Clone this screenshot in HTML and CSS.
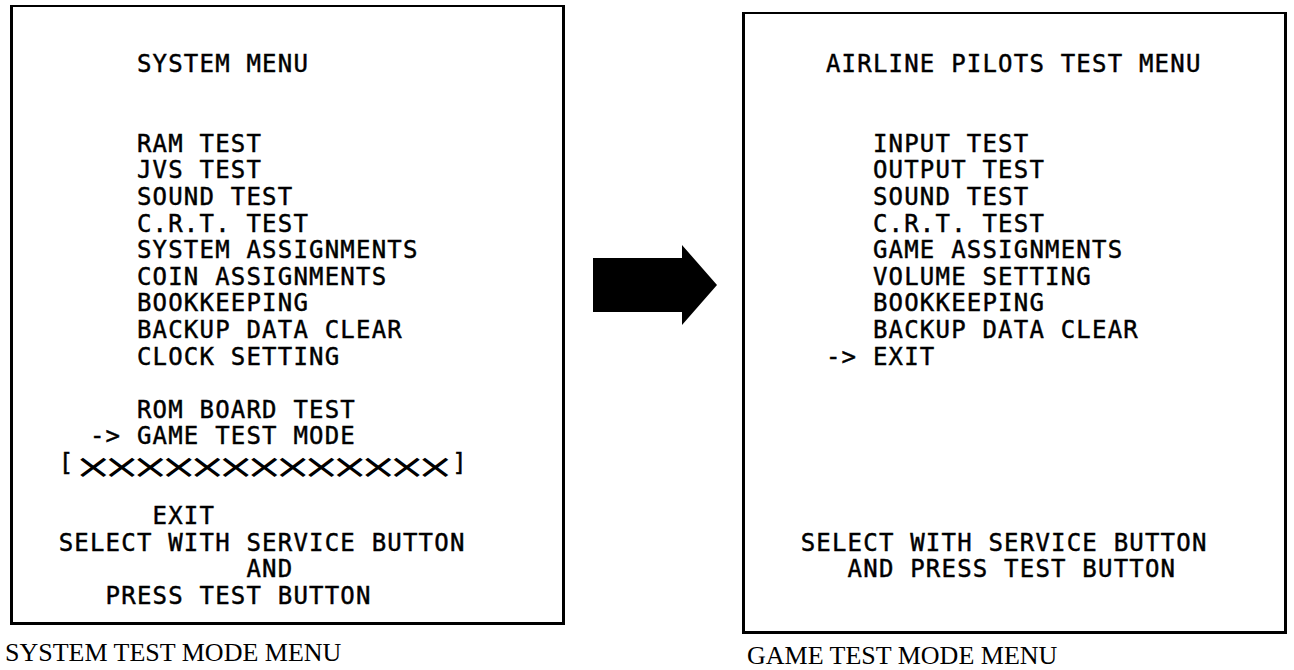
FILE: index.html
```
<!DOCTYPE html>
<html lang="en">
<head>
    <meta charset="UTF-8">
    <meta name="viewport" content="width=device-width, initial-scale=1.0">
    <title>Test Mode Menus</title>
    <link rel="stylesheet" href="styles.css">
</head>
<body>
    <main class="page">
        <figure class="shot system-shot">
            <pre class="screen system-screen">      SYSTEM MENU


      RAM TEST
      JVS TEST
      SOUND TEST
      C.R.T. TEST
      SYSTEM ASSIGNMENTS
      COIN ASSIGNMENTS
      BOOKKEEPING
      BACKUP DATA CLEAR
      CLOCK SETTING

      ROM BOARD TEST
   -> GAME TEST MODE
 [<span class="crosses"><span>×××××××××××××</span></span>]

       EXIT
 SELECT WITH SERVICE BUTTON
             AND
    PRESS TEST BUTTON</pre>
            <figcaption class="caption">SYSTEM TEST MODE MENU</figcaption>
        </figure>

        <svg class="big-arrow" width="124" height="80" viewBox="0 0 124 80">
            <polygon points="0,13 89,13 89,0 124,40 89,80 89,67 0,67" fill="#000"/>
        </svg>

        <figure class="shot game-shot">
            <pre class="screen game-screen">   AIRLINE PILOTS TEST MENU


      INPUT TEST
      OUTPUT TEST
      SOUND TEST
      C.R.T. TEST
      GAME ASSIGNMENTS
      VOLUME SETTING
      BOOKKEEPING
      BACKUP DATA CLEAR
   -> EXIT






 <span class="nudge">SELECT WITH SERVICE BUTTON</span>
    <span class="nudge">AND PRESS TEST BUTTON</span></pre>
            <figcaption class="caption">GAME TEST MODE MENU</figcaption>
        </figure>
    </main>
</body>
</html>
```
FILE: styles.css
```
body {
    margin: 0;
    background-color: #fff;
    color: #000;
}

.page {
    display: flex;
    align-items: flex-start;
    width: 1294px;
    height: 670px;
    overflow: hidden;
}

.shot {
    margin: 0;
}

.system-shot {
    margin-left: 10px;
    margin-top: 5px;
    width: 555px;
}

.game-shot {
    margin-left: 25px;
    margin-top: 12px;
    width: 545px;
}

/* the monitor frame: each character sits in a fixed cell */
.screen {
    box-sizing: border-box;
    margin: 0;
    border: 3px solid #000;
    border-top-width: 2px;
    font-family: "DejaVu Sans Mono", monospace;
    font-size: 24px;
    letter-spacing: 1.2px; /* 14.45 + 1.2 = one 15.65px cell */
    line-height: 26.6px;
    -webkit-text-stroke: 0.45px #000;
    white-space: pre;
    overflow: hidden;
}

.system-screen {
    height: 620px;
    padding: 44px 0 0 30px;
}

.game-screen {
    height: 622px;
    padding: 37px 0 0 34px;
}

.nudge {
    padding-left: 6px;
}

.crosses {
    display: inline-block;
    width: 378px;
    line-height: 12px;
    vertical-align: -7px;
}

.crosses span {
    display: inline-block;
    font-family: "DejaVu Sans", sans-serif;
    font-size: 33px;
    letter-spacing: -7.15px;
    -webkit-text-stroke: 0;
    transform: scaleX(1.39);
    transform-origin: 0 50%;
}

.big-arrow {
    display: block;
    flex: none;
    margin-left: 28px;
    margin-top: 245px;
}

.caption {
    font-family: "Liberation Serif", "Times New Roman", serif;
    font-size: 26px;
    line-height: 30px;
    white-space: nowrap;
}

.system-shot .caption {
    margin-top: 13px;
    margin-left: -5px;
}

.game-shot .caption {
    margin-top: 7px;
    margin-left: 5px;
}
```
